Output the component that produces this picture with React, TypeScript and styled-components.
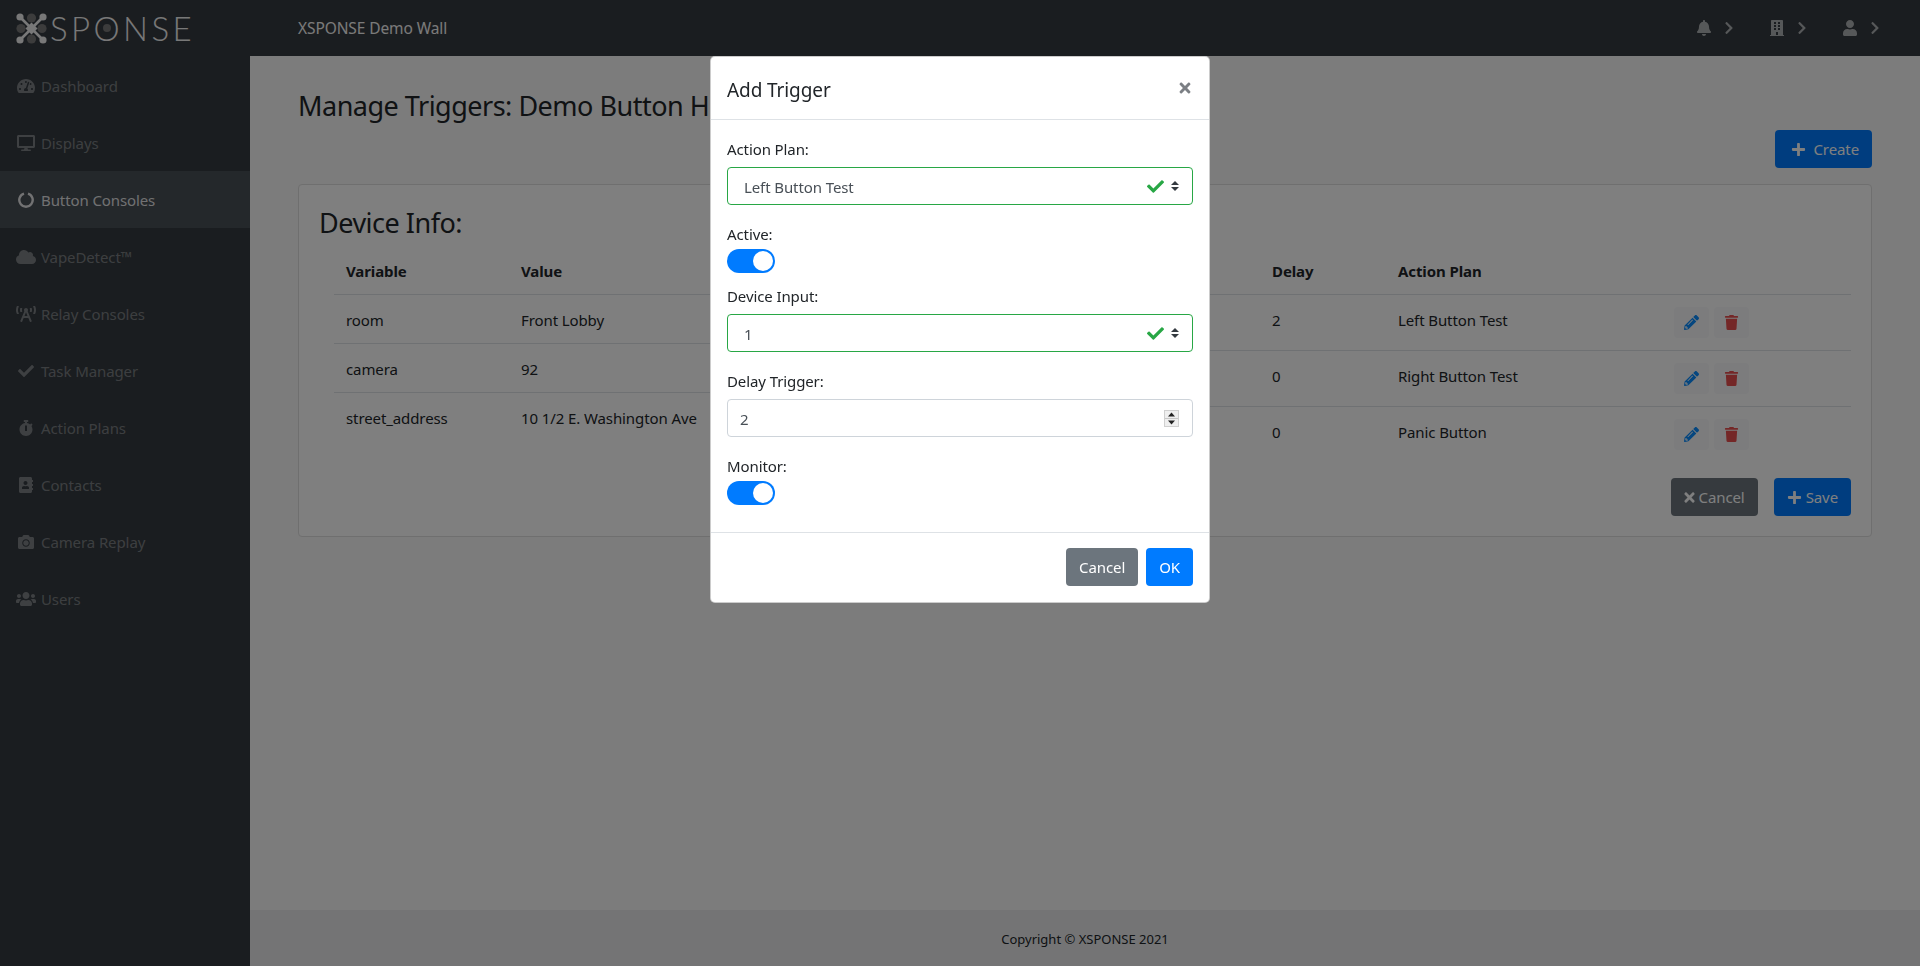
import React from 'react';
import styled, { createGlobalStyle } from 'styled-components';
import {
  FaAddressBook,
  FaBell,
  FaBroadcastTower,
  FaBuilding,
  FaCamera,
  FaCheck,
  FaChevronRight,
  FaCloud,
  FaDesktop,
  FaPencilAlt,
  FaPlus,
  FaStopwatch,
  FaTachometerAlt,
  FaTimes,
  FaTrash,
  FaUser,
  FaUsers,
} from 'react-icons/fa';

const FONT = `'Noto Sans', 'Open Sans', sans-serif`;

const GlobalStyle = createGlobalStyle`
  html, body {
    margin: 0;
    padding: 0;
    height: 100%;
    overflow: hidden;
  }
  * {
    box-sizing: border-box;
  }
  body {
    font-family: ${FONT};
    font-size: 15px;
    letter-spacing: -0.1px;
    color: #212529;
    background: #f8f8f8;
  }
`;

const Page = styled.div`
  display: flex;
  flex-direction: column;
  height: 966px;
`;

const TopBar = styled.header`
  flex: 0 0 56px;
  display: flex;
  align-items: center;
  background: #343a40;
  color: #fff;
`;

const Brand = styled.div`
  width: 298px;
  padding-left: 16px;
  display: flex;
  align-items: center;
  gap: 3px;
`;

const BrandText = styled.span`
  font-family: 'Lato', sans-serif;
  font-weight: 300;
  font-size: 33px;
  letter-spacing: 3.4px;
  line-height: 1;
  color: #f0f0f0;
`;

const BrandO = styled.span`
  position: relative;

  &::after {
    content: '';
    position: absolute;
    left: 50%;
    top: 50%;
    width: 8px;
    height: 8px;
    margin: -4px 0 0 -5px;
    border-radius: 50%;
    background: #787878;
  }
`;

const WallName = styled.div`
  flex: 1;
  font-size: 15.5px;
  color: #f4f4f4;
`;

const TopActions = styled.div`
  display: flex;
  align-items: center;
  gap: 33px;
  padding-right: 38px;
`;

const TopAction = styled.div`
  display: flex;
  align-items: center;
  gap: 10px;
  font-size: 16px;
  color: rgba(255, 255, 255, 0.6);

  svg + svg {
    font-size: 14px;
  }
`;

const Body = styled.div`
  flex: 1;
  display: flex;
  min-height: 0;
`;

const SideBar = styled.nav`
  flex: 0 0 250px;
  background: #343a40;
  padding-top: 1px;
`;

const NavItem = styled.div<{ $active?: boolean }>`
  height: 57px;
  display: flex;
  align-items: center;
  padding-left: 16px;
  gap: 6px;
  font-size: 15px;
  color: ${({ $active }) => ($active ? 'rgba(255, 255, 255, 0.85)' : 'rgba(255, 255, 255, 0.36)')};
  background: ${({ $active }) => ($active ? '#495057' : 'transparent')};
`;

const NavIcon = styled.span<{ $size: number }>`
  width: 19px;
  display: flex;
  justify-content: center;
  font-size: ${({ $size }) => $size}px;
  color: inherit;

  svg {
    flex-shrink: 0;
  }
`;

const Content = styled.div`
  flex: 1;
  display: flex;
  flex-direction: column;
  min-width: 0;
`;

const Main = styled.main`
  flex: 1;
  padding: 33px 48px 0;
`;

const PageTitle = styled.h1`
  margin: 0;
  font-size: 27px;
  line-height: 34px;
  font-weight: 400;
  letter-spacing: -0.5px;
`;

const ActionBar = styled.div<{ $top: number; $gap?: number }>`
  display: flex;
  justify-content: flex-end;
  gap: ${({ $gap }) => $gap ?? 0}px;
  margin-top: ${({ $top }) => $top}px;
`;

const Button = styled.button<{ $variant: 'primary' | 'secondary'; $left?: number; $gap?: number }>`
  height: 38px;
  padding: 0 13px 0 ${({ $left }) => $left ?? 13}px;
  border: none;
  border-radius: 4px;
  display: inline-flex;
  align-items: center;
  gap: ${({ $gap }) => $gap ?? 4}px;
  font-family: ${FONT};
  font-size: 15px;
  letter-spacing: -0.1px;
  color: #fff;
  background: ${({ $variant }) => ($variant === 'primary' ? '#007bff' : '#6c757d')};
`;

const Card = styled.section`
  margin-top: 16px;
  height: 353px;
  border: 1px solid #dedede;
  border-radius: 4px;
  background: #fff;
  padding: 20px 20px 19px 20px;
`;

const CardTitle = styled.h3`
  margin: 0;
  padding-top: 1px;
  font-size: 27px;
  line-height: 33px;
  font-weight: 400;
  letter-spacing: -0.5px;
`;

const Tables = styled.div`
  display: flex;
  align-items: flex-start;
  gap: 40px;
  margin-top: 7px;
  padding-left: 15px;
`;

const Table = styled.table<{ $width: number }>`
  width: ${({ $width }) => $width}px;
  table-layout: fixed;
  border-collapse: collapse;
`;

const Col = styled.col<{ $width?: number }>`
  width: ${({ $width }) => ($width ? `${$width}px` : 'auto')};
`;

const Th = styled.th`
  height: 48px;
  padding: 2px 12px 0;
  text-align: left;
  font-weight: 700;
  font-size: 15px;
`;

const Td = styled.td<{ $height: number; $raised?: boolean }>`
  height: ${({ $height }) => $height}px;
  padding: ${({ $raised }) => ($raised ? '0 12px 4px' : '2px 12px 0')};
  border-top: 1px solid #dee2e6;
  white-space: nowrap;
  font-size: 15px;
`;

const ActionCell = styled.td`
  height: 56px;
  padding: 0 12px;
  border-top: 1px solid #dee2e6;
`;

const RowActions = styled.div`
  display: flex;
  gap: 5px;
`;

const IconButton = styled.span<{ $color: string }>`
  width: 35px;
  height: 31px;
  display: flex;
  align-items: center;
  justify-content: center;
  border-radius: 4px;
  background: #f8f9fa;
  color: ${({ $color }) => $color};
  font-size: 15px;
`;

const Footer = styled.footer`
  flex: 0 0 56px;
  padding-top: 2px;
  display: flex;
  align-items: center;
  justify-content: center;
  background: #e8e9eb;
  font-size: 13px;
  letter-spacing: 0;
`;

const Backdrop = styled.div`
  position: fixed;
  inset: 0;
  background: rgba(0, 0, 0, 0.5);
`;

const Modal = styled.div`
  position: fixed;
  top: 56px;
  left: 710px;
  width: 500px;
  height: 547px;
  background: #fff;
  border: 1px solid rgba(0, 0, 0, 0.2);
  border-radius: 5px;
  display: flex;
  flex-direction: column;
`;

const ModalHeader = styled.div`
  flex: 0 0 63px;
  display: flex;
  align-items: center;
  justify-content: space-between;
  padding: 4px 16px 0;
  border-bottom: 1px solid #dee2e6;
`;

const ModalTitle = styled.h5`
  margin: 0;
  font-size: 19px;
  font-weight: 400;
`;

const CloseButton = styled.span`
  display: flex;
  font-size: 16px;
  margin: -5px 0 0 0;
  color: #7b7f84;
`;

const ModalBody = styled.div`
  flex: 1;
  padding: 17px 16px 0;
`;

const FieldLabel = styled.label<{ $top?: number; $gap: number }>`
  display: block;
  line-height: 24px;
  font-size: 15px;
  padding-top: ${({ $top }) => $top ?? 0}px;
  margin-bottom: ${({ $gap }) => $gap}px;
`;

const Field = styled.div<{ $valid?: boolean }>`
  height: 38px;
  display: flex;
  align-items: center;
  margin-bottom: 16px;
  padding: 0 12px 0 ${({ $valid }) => ($valid ? 16 : 12)}px;
  border: 1px solid ${({ $valid }) => ($valid ? '#28a745' : '#ced4da')};
  border-radius: 4px;
  color: #495057;
  font-size: 15px;
`;

const FieldValue = styled.span`
  flex: 1;
  padding-top: 1px;
`;

const ValidMark = styled.span`
  display: flex;
  color: #28a745;
  font-size: 17px;
  margin-right: 6px;
`;

const Toggle = styled.div`
  width: 48px;
  height: 24px;
  margin-bottom: 11px;
  padding: 2px;
  display: flex;
  justify-content: flex-end;
  border-radius: 12px;
  background: #007bff;

  &::after {
    content: '';
    width: 20px;
    height: 20px;
    border-radius: 50%;
    background: #fff;
  }
`;

const Spinner = styled.span`
  width: 15px;
  height: 17px;
  margin-right: 1px;
  display: flex;
  flex-direction: column;
  gap: 1px;
  background: #c8c8c8;
  border: 1px solid #d0d0d0;
  overflow: hidden;
`;

const SpinnerPart = styled.span`
  flex: 1;
  min-height: 0;
  display: flex;
  align-items: center;
  justify-content: center;
  background: #efefef;
`;

const ModalFooter = styled.div`
  flex: 0 0 70px;
  display: flex;
  justify-content: flex-end;
  align-items: center;
  gap: 8px;
  padding: 0 16px 2px;
  border-top: 1px solid #dee2e6;
`;

const SelectArrows = () => (
  <svg width="10" height="12" viewBox="0 0 10 12">
    <path d="M5 1 9 5H1zM5 11 1 7h8z" fill="#343a40" />
  </svg>
);

const SpinArrow = ({ up }: { up?: boolean }) => (
  <SpinnerPart>
    <svg width="9" height="5" viewBox="0 0 9 5">
      <path d={up ? 'M4.5 .5 8 4.5H1z' : 'M4.5 4.5 1 .5h7z'} fill="#222" />
    </svg>
  </SpinnerPart>
);

const PowerRing = () => (
  <svg width="16" height="16" viewBox="0 0 16 16">
    <path d="M6 1.6a6.7 6.7 0 1 0 4 0" fill="none" stroke="currentColor" strokeWidth="2.4" />
  </svg>
);

const LogoMark = () => (
  <svg width="31" height="31" viewBox="0 0 31 31">
    <g fill="#787878">
      <circle cx="15.5" cy="5" r="4.6" />
      <circle cx="15.5" cy="26" r="4.6" />
      <circle cx="5" cy="15.5" r="4.6" />
      <circle cx="26" cy="15.5" r="4.6" />
    </g>
    <path d="M5 5 26 26M26 5 5 26" stroke="#f0f0f0" strokeWidth="2.6" />
    <path d="M15.5 9.5 21.5 15.5 15.5 21.5 9.5 15.5z" fill="#f0f0f0" />
    <g fill="#f0f0f0">
      <circle cx="4" cy="4" r="3.6" />
      <circle cx="27" cy="4" r="3.6" />
      <circle cx="4" cy="27" r="3.6" />
      <circle cx="27" cy="27" r="3.6" />
    </g>
  </svg>
);

const navItems = [
  { label: 'Dashboard', icon: <FaTachometerAlt />, size: 18 },
  { label: 'Displays', icon: <FaDesktop />, size: 18 },
  { label: 'Button Consoles', icon: <PowerRing />, size: 16, active: true },
  { label: 'VapeDetect™', icon: <FaCloud />, size: 20 },
  { label: 'Relay Consoles', icon: <FaBroadcastTower />, size: 20 },
  { label: 'Task Manager', icon: <FaCheck />, size: 16 },
  { label: 'Action Plans', icon: <FaStopwatch />, size: 16 },
  { label: 'Contacts', icon: <FaAddressBook />, size: 16 },
  { label: 'Camera Replay', icon: <FaCamera />, size: 16 },
  { label: 'Users', icon: <FaUsers />, size: 20 },
];

const deviceInfo = [
  ['room', 'Front Lobby'],
  ['camera', '92'],
  ['street_address', '10 1/2 E. Washington Ave'],
];

const triggers = [
  { input: '1', delay: 2, plan: 'Left Button Test' },
  { input: '2', delay: 0, plan: 'Right Button Test' },
  { input: '3', delay: 0, plan: 'Panic Button' },
];

export default function App() {
  return (
    <Page>
      <GlobalStyle />
      <TopBar>
        <Brand>
          <LogoMark />
          <BrandText>
            SP<BrandO>O</BrandO>NSE
          </BrandText>
        </Brand>
        <WallName>XSPONSE Demo Wall</WallName>
        <TopActions>
          <TopAction>
            <FaBell />
            <FaChevronRight />
          </TopAction>
          <TopAction>
            <FaBuilding />
            <FaChevronRight />
          </TopAction>
          <TopAction>
            <FaUser />
            <FaChevronRight />
          </TopAction>
        </TopActions>
      </TopBar>

      <Body>
        <SideBar>
          {navItems.map((item) => (
            <NavItem key={item.label} $active={item.active}>
              <NavIcon $size={item.size}>{item.icon}</NavIcon>
              {item.label}
            </NavItem>
          ))}
        </SideBar>

        <Content>
          <Main>
            <PageTitle>Manage Triggers: Demo Button Hub</PageTitle>
            <ActionBar $top={7}>
              <Button $variant="primary" $left={16} $gap={7} type="button">
                <FaPlus /> Create
              </Button>
            </ActionBar>

            <Card>
              <CardTitle>Device Info:</CardTitle>
              <Tables>
                <Table $width={666}>
                  <colgroup>
                    <Col $width={175} />
                    <Col />
                  </colgroup>
                  <thead>
                    <tr>
                      <Th>Variable</Th>
                      <Th>Value</Th>
                    </tr>
                  </thead>
                  <tbody>
                    {deviceInfo.map(([name, value]) => (
                      <tr key={name}>
                        <Td $height={49}>{name}</Td>
                        <Td $height={49}>{value}</Td>
                      </tr>
                    ))}
                  </tbody>
                </Table>

                <Table $width={811}>
                  <colgroup>
                    <Col $width={220} />
                    <Col $width={126} />
                    <Col $width={276} />
                    <Col $width={189} />
                  </colgroup>
                  <thead>
                    <tr>
                      <Th>Input</Th>
                      <Th>Delay</Th>
                      <Th>Action Plan</Th>
                      <Th />
                    </tr>
                  </thead>
                  <tbody>
                    {triggers.map((trigger) => (
                      <tr key={trigger.plan}>
                        <Td $height={56} $raised>
                          {trigger.input}
                        </Td>
                        <Td $height={56} $raised>
                          {trigger.delay}
                        </Td>
                        <Td $height={56} $raised>
                          {trigger.plan}
                        </Td>
                        <ActionCell>
                          <RowActions>
                            <IconButton $color="#0a8cff">
                              <FaPencilAlt />
                            </IconButton>
                            <IconButton $color="#e84f4f">
                              <FaTrash />
                            </IconButton>
                          </RowActions>
                        </ActionCell>
                      </tr>
                    ))}
                  </tbody>
                </Table>
              </Tables>

              <ActionBar $top={16} $gap={16}>
                <Button $variant="secondary" $left={11} $gap={2} type="button">
                  <FaTimes /> Cancel
                </Button>
                <Button $variant="primary" type="button">
                  <FaPlus /> Save
                </Button>
              </ActionBar>
            </Card>
          </Main>
          <Footer>Copyright © XSPONSE 2021</Footer>
        </Content>
      </Body>

      <Backdrop />

      <Modal>
        <ModalHeader>
          <ModalTitle>Add Trigger</ModalTitle>
          <CloseButton>
            <FaTimes />
          </CloseButton>
        </ModalHeader>
        <ModalBody>
          <FieldLabel $gap={6}>Action Plan:</FieldLabel>
          <Field $valid>
            <FieldValue>Left Button Test</FieldValue>
            <ValidMark>
              <FaCheck />
            </ValidMark>
            <SelectArrows />
          </Field>

          <FieldLabel $top={1} $gap={3}>
            Active:
          </FieldLabel>
          <Toggle />

          <FieldLabel $gap={6}>Device Input:</FieldLabel>
          <Field $valid>
            <FieldValue>1</FieldValue>
            <ValidMark>
              <FaCheck />
            </ValidMark>
            <SelectArrows />
          </Field>

          <FieldLabel $top={1} $gap={6}>
            Delay Trigger:
          </FieldLabel>
          <Field>
            <FieldValue>2</FieldValue>
            <Spinner>
              <SpinArrow up />
              <SpinArrow />
            </Spinner>
          </Field>

          <FieldLabel $top={1} $gap={3}>
            Monitor:
          </FieldLabel>
          <Toggle />
        </ModalBody>
        <ModalFooter>
          <Button $variant="secondary" type="button">
            Cancel
          </Button>
          <Button $variant="primary" type="button">
            OK
          </Button>
        </ModalFooter>
      </Modal>
    </Page>
  );
}
